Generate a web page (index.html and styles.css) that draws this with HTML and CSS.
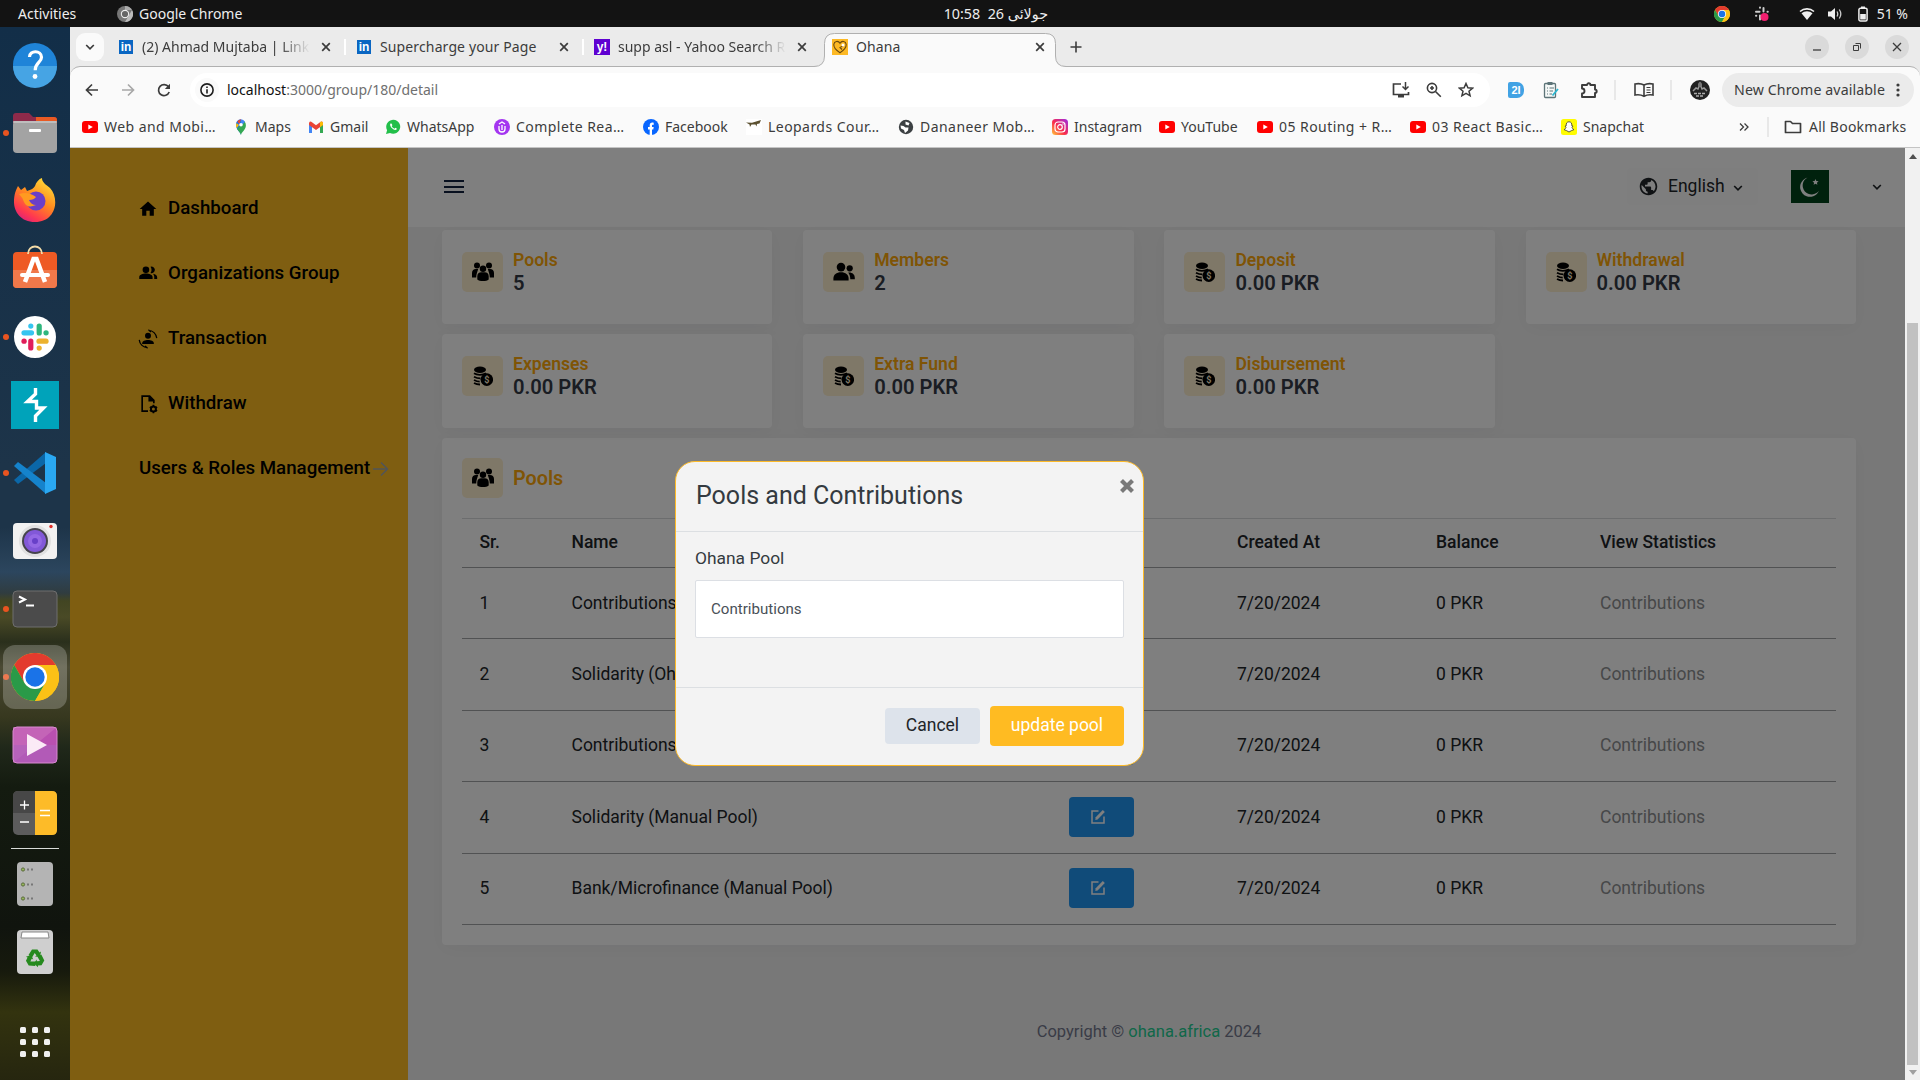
FILE: index.html
```html
<!DOCTYPE html>
<html lang="en">
<head>
<meta charset="utf-8">
<title>Ohana</title>
<link rel="stylesheet" href="styles.css">
</head>
<body>
<svg class="defs" width="0" height="0" aria-hidden="true">
  <symbol id="close" viewBox="0 0 10 10"><path d="M1.2 1.2l7.6 7.6M8.8 1.2L1.2 8.8" stroke="#3c3c3c" stroke-width="1.7" fill="none"/></symbol>
  <symbol id="youtube" viewBox="0 0 16 16"><rect y="2" width="16" height="12" rx="3" fill="#f00"/><path d="M6.3 5.4v5.2L10.8 8z" fill="#fff"/></symbol>
  <symbol id="chrome" viewBox="0 0 48 48"><circle cx="24" cy="24" r="24" fill="#fbc116"/><path d="M3.2 12A24 24 0 0 1 44.8 12H24L13.6 30z" fill="#e33b2e"/><path d="M3.2 12A24 24 0 0 0 24 48L34.4 30 24 36 13.6 30z" fill="#2a9a48"/><path d="M24 12h20.8A24 24 0 0 1 24 48l10.4-18z" fill="#fbc116"/><circle cx="24" cy="24" r="12" fill="#fff"/><circle cx="24" cy="24" r="9.7" fill="#1a73e8"/></symbol>
  <symbol id="chevron" viewBox="0 0 10 6"><path d="M1.2 1l3.8 3.8L8.8 1" stroke="currentColor" stroke-width="1.7" fill="none"/></symbol>
  <symbol id="group" viewBox="0 0 22 20"><g fill="#000"><circle cx="5" cy="3.6" r="3"/><circle cx="17" cy="3.6" r="3"/><path d="M0 15.600V11c0-2.600 1.600-4.100 4-4.100h2.200c-.8 3.100-1.900 4.500-2 8.700zM22 15.600V11c0-2.600-1.600-4.100-4-4.100h-2.200c.8 3.100 1.900 4.500 2 8.700z"/><circle cx="11" cy="6.700" r="3.200"/><path d="M5.300 17.500v-3.300c0-2.500 1.600-3.900 4-3.900h3.400c2.400 0 4 1.400 4 3.900v3.300c-1.300 1-3.200 1.500-5.700 1.500s-4.400-.5-5.700-1.500z"/></g></symbol>
  <symbol id="members" viewBox="0 0 22 20"><g fill="#000"><circle cx="8" cy="5.100" r="4.300"/><path d="M.4 18.600v-2.200c0-3.700 3-6.200 7.600-6.200s7.600 2.500 7.600 6.200v2.200z"/><circle cx="16.700" cy="6.300" r="3.100"/><path d="M15.200 10.500c3.600-.6 6.600 1.600 6.600 5.200v1.600h-4.500c0-2.800-.7-5.100-2.100-6.800z"/></g></symbol>
  <symbol id="coins" viewBox="0 0 20 20"><ellipse cx="7" cy="3.700" rx="6" ry="3.200"/><path d="M1 7.200c3 2.100 8.600 2.100 12 0M1 10.700c2.500 1.500 4 1.700 6.500 1.700M1 14c2.500 1.500 4 1.700 5.700 1.700M1 17c2.100 1.200 4 1.500 6 1.500" stroke="#000" stroke-width="1.800" fill="none"/><circle cx="13.800" cy="13.600" r="6.300"/><text x="13.800" y="16.800" text-anchor="middle" class="coin-sign">$</text></symbol>
  <symbol id="edit" viewBox="0 0 16 16"><path d="M8.500 2H2v12h12V7.500" stroke="#fff" stroke-width="1.500" fill="none"/><path d="M5.300 11l.4-2.700L12.800 1l2 2-7.200 7.400z" fill="#fff"/></symbol>
  <symbol id="globe" viewBox="0 0 24 24"><path fill="currentColor" d="M12 2C6.480 2 2 6.480 2 12s4.480 10 10 10 10-4.480 10-10S17.520 2 12 2zm-1 17.930c-3.950-.49-7-3.850-7-7.930 0-.62.080-1.210.210-1.790L9 15v1c0 1.100.9 2 2 2v1.930zm6.900-2.540c-.26-.81-1-1.390-1.900-1.390h-1v-3c0-.55-.45-1-1-1H8v-2h2c.55 0 1-.45 1-1V7h2c1.100 0 2-.9 2-2v-.41c2.930 1.190 5 4.060 5 7.410 0 2.080-.8 3.970-2.100 5.390z"/></symbol>
  <symbol id="slack" viewBox="0 0 28 28"><g stroke-width="5.200" stroke-linecap="round"><path d="M3 9.800h7.500" stroke="#36c5f0"/><path d="M9.800 3v.1" stroke="#36c5f0"/><path d="M18.200 3v7" stroke="#2eb67d"/><path d="M25 9.800h.1" stroke="#2eb67d"/><path d="M18 18.200h7" stroke="#ecb22e"/><path d="M18.200 25v.1" stroke="#ecb22e"/><path d="M9.800 18v7" stroke="#e01e5a"/><path d="M3 18.200h.1" stroke="#e01e5a"/></g></symbol>
</svg>

<header class="topbar">
  <span class="activities">Activities</span>
  <svg class="app-icon" width="16" height="16" viewBox="0 0 16 16"><circle cx="8" cy="8" r="8" fill="#777"/><path d="M8 0a8 8 0 0 1 7 4H8z" fill="#aaa"/><path d="M15 4a8 8 0 0 1-7 12l3.500-6z" fill="#bbb"/><circle cx="8" cy="8" r="4.200" fill="#eee"/><circle cx="8" cy="8" r="3.100" fill="#666"/></svg>
  <span class="app-name">Google Chrome</span>
  <span class="clock" dir="rtl" lang="ur">جولائی 26 &nbsp;10:58</span>
  <div class="tray">
    <svg class="tray-chrome" width="16" height="16"><use href="#chrome"/></svg>
    <svg class="tray-slack" width="16" height="16" viewBox="0 0 16 16"><path d="M2 5.800h3.500M6 1.500v.3M9.500 2v3.500M13.500 5.800h.3M2 9.800h.3M6 9.500v4" stroke="#ccc" stroke-width="2" stroke-linecap="round"/><circle cx="10.500" cy="11" r="4" fill="#f01f6f"/></svg>
    <svg class="tray-wifi" width="16" height="14" viewBox="0 0 16 14"><path d="M1 4.500a10.500 10.500 0 0 1 14 0" stroke="#eee" stroke-width="1.600" fill="none"/><path d="M2.500 6.300a8.500 8.500 0 0 1 11 0L8 13z" fill="#eee"/></svg>
    <svg class="tray-volume" width="16" height="14" viewBox="0 0 16 14"><path d="M1 4.500h3L8 1v12L4 9.500H1z" fill="#eee"/><path d="M10 4.500q1.500 2.500 0 5M12.300 2.500q3 4.500 0 9" stroke="#ccc" stroke-width="1.300" fill="none"/></svg>
    <svg class="tray-battery" width="10" height="16" viewBox="0 0 10 16"><path d="M3 .5h4v1.800H3z" fill="#eee"/><rect x=".9" y="2.300" width="8.200" height="12.700" rx="1.500" fill="none" stroke="#eee" stroke-width="1.500"/><rect x="2.200" y="8" width="5.600" height="5.500" fill="#eee"/></svg>
    <span>51 %</span>
  </div>
</header>

<div class="desktop">
  <nav class="dock">
    <div class="slot"><svg width="46" height="46" viewBox="0 0 46 46"><circle cx="23" cy="23" r="22" fill="#1f84d8"/><path d="M1 24a22 22 0 0 0 44 0z" fill="#46a4e4"/><path d="M17.500 15c0-7 12-7 12 .2 0 5.300-6.300 5.500-6.300 13" stroke="#fff" stroke-width="3.200" fill="none"/><circle cx="23" cy="34.500" r="2.400" fill="#fff"/></svg></div>
    <div class="slot running"><svg width="46" height="42" viewBox="0 0 46 42"><path d="M1 4q0-3 3-3h13l4 4h21q3 0 3 3v12H1z" fill="#8e2a4a"/><path d="M24 5h18q3 0 3 3v10H24z" fill="#e95a23"/><rect x="1" y="9" width="44" height="32" rx="4" fill="#a3a3a3"/><rect x="1" y="9" width="44" height="2" rx="1" fill="#bdbdbd"/><rect x="17" y="17" width="12" height="3" rx="1" fill="#fff"/></svg></div>
    <div class="slot raised"><svg width="44" height="46" viewBox="0 0 44 46"><defs><linearGradient id="ff" x1=".8" y1="0" x2=".2" y2="1"><stop offset="0" stop-color="#ffe13a"/><stop offset=".45" stop-color="#ff8a1e"/><stop offset=".8" stop-color="#ff3750"/><stop offset="1" stop-color="#d8207e"/></linearGradient></defs><path d="M1 25C1 17 3 13 5 9l3 4 4-3 2 4c4-1 7-3 8-5 1-4 4-7 7-8 0 4 3 6 8 10 10 11 6 34-15 34C8 45 1 35 1 25z" fill="url(#ff)"/><circle cx="23" cy="24" r="9.500" fill="#6a3fc8"/><path d="M6 17q9-3 17 3-2 3-7 3 2 5 7 5-9 4-12-3-1-4-5-8z" fill="#ff9a20"/></svg></div>
    <div class="slot raised-more"><svg width="46" height="46" viewBox="0 0 46 46"><rect x="1" y="8" width="44" height="36" rx="4" fill="#ee5a24"/><path d="M1 26h44v14q0 4-4 4H5q-4 0-4-4z" fill="#f0784a"/><path d="M16 10c0-10 14-10 14 0" stroke="#f4dca8" stroke-width="1.800" fill="none"/><path d="M13 38L21.500 15h3L33 38" stroke="#fff" stroke-width="4.500" fill="none"/><path d="M10 31h26" stroke="#fff" stroke-width="4" stroke-linecap="round"/></svg></div>
    <div class="slot running"><svg width="42" height="42" viewBox="0 0 42 42"><circle cx="21" cy="21" r="21" fill="#fff"/><svg x="7" y="7" width="28" height="28"><use href="#slack"/></svg></svg></div>
    <div class="slot"><svg width="48" height="48" viewBox="0 0 48 48"><path d="M0 0h48v48H0z" fill="#00a3ba"/><path d="M24.500 7v6L16.500 20.500H25.500v6.500H32.500L24.500 35v6" stroke="#fff" stroke-width="3.400" fill="none"/></svg></div>
    <div class="slot running"><svg width="44" height="44" viewBox="0 0 44 44"><path d="M1 29l4 4L33 12V1z" fill="#0b67a8"/><path d="M1 15l4-4 28 21v11z" fill="#1583cc"/><path d="M32 1l11 5v32l-11 5z" fill="#2aa8f2"/></svg></div>
    <div class="slot"><svg width="46" height="38" viewBox="0 0 46 38"><rect x="1" y="1" width="44" height="36" rx="4" fill="#f2f2f2"/><circle cx="23" cy="19" r="16" fill="#e1e1e1"/><circle cx="23" cy="19" r="13" fill="#45444c"/><circle cx="23" cy="19" r="11" fill="#8258d8"/><circle cx="23" cy="19" r="7" fill="#9468e4"/><circle cx="23" cy="19" r="3" fill="#6840c8"/><circle cx="39" cy="4.500" r="1.700" fill="#e0302a"/></svg></div>
    <div class="slot running"><svg width="46" height="38" viewBox="0 0 46 38"><rect x="1" y="1" width="44" height="36" rx="4" fill="#4b4b4b" stroke="#6e6e6e"/><path d="M7 6.500l6 3-6 3" stroke="#fff" stroke-width="2" fill="none"/><path d="M14 15.500h8" stroke="#fff" stroke-width="2"/></svg></div>
    <div class="slot running current"><svg width="48" height="48"><use href="#chrome"/></svg></div>
    <div class="slot"><svg width="46" height="38" viewBox="0 0 46 38"><rect x="1" y="1" width="44" height="36" rx="4" fill="#b950b0"/><path d="M1 1h44L1 37z" fill="#cc72bd" opacity=".6"/><path d="M1 19h44v14q0 4-4 4H5q-4 0-4-4z" fill="#ae60bd" opacity=".6"/><rect x="1" y="1" width="44" height="36" rx="4" fill="none" stroke="#d889cf"/><path d="M15 8v22l20-11z" fill="#fbeaf6"/></svg></div>
    <div class="slot"><svg width="46" height="46" viewBox="0 0 46 46"><rect x="1" y="1" width="44" height="44" rx="5" fill="#5c5c5c"/><path d="M1 23V6q0-5 5-5h17v22z" fill="#474747"/><path d="M23 1h17q5 0 5 5v34q0 5-5 5H23z" fill="#fdbb28"/><path d="M8 15h9M12.500 10.500v9M8 32h9M28 20.500h10M28 25.500h10" stroke="#fff" stroke-width="1.300"/></svg></div>
    <hr>
    <div class="slot"><svg width="38" height="46" viewBox="0 0 38 46"><rect x="1" y="1" width="36" height="44" rx="4" fill="#b4b4b4"/><g fill="#93b658" stroke="#5c6b3c"><circle cx="7" cy="8.500" r="1.600"/><circle cx="7" cy="23.500" r="1.600"/><circle cx="7" cy="37.500" r="1.600"/></g><path d="M11 8.500h7M11 23.500h7M11 37.500h7" stroke="#777" stroke-width="2" stroke-dasharray="2 2"/></svg></div>
    <div class="slot"><svg width="38" height="46" viewBox="0 0 38 46"><rect x="1" y="1" width="36" height="44" rx="4" fill="#cfcfcf"/><path d="M5 9l1-6h26l1 6z" fill="#fff" stroke="#888"/><g fill="#268a1e"><path id="leaf" d="M12.500 26l3.500-5.500h5.500l2 3 1.500-1-1 5.500-5-.500 1.500-1-1.800-2.500-2.700 4.500z"/><use href="#leaf" transform="rotate(120 19 29.500)"/><use href="#leaf" transform="rotate(240 19 29.500)"/></g></svg></div>
    <svg class="apps-grid" width="30" height="30" viewBox="0 0 30 30"><g fill="#f0f0f0"><rect width="6" height="6" rx="1.500"/><rect x="12" width="6" height="6" rx="1.500"/><rect x="24" width="6" height="6" rx="1.500"/><rect y="12" width="6" height="6" rx="1.500"/><rect x="12" y="12" width="6" height="6" rx="1.500"/><rect x="24" y="12" width="6" height="6" rx="1.500"/><rect y="24" width="6" height="6" rx="1.500"/><rect x="12" y="24" width="6" height="6" rx="1.500"/><rect x="24" y="24" width="6" height="6" rx="1.500"/></g></svg>
  </nav>

  <div class="browser">
    <div class="tabstrip">
      <div class="tab-search"><svg width="10" height="6"><use href="#chevron"/></svg></div>
      <div class="tab sep"><span class="fav linkedin">in</span><span class="tab-title fade">(2) Ahmad Mujtaba | LinkedIn</span><svg width="10" height="10"><use href="#close"/></svg></div>
      <div class="tab sep"><span class="fav linkedin">in</span><span class="tab-title wide">Supercharge your Page</span><svg width="10" height="10"><use href="#close"/></svg></div>
      <div class="tab"><span class="fav yahoo">y!</span><span class="tab-title fade">supp asl - Yahoo Search Results</span><svg width="10" height="10"><use href="#close"/></svg></div>
      <div class="tab active">
        <svg class="tab-shape" width="252" height="35" viewBox="0 0 252 35"><path d="M0 33.500Q10.500 33.500 10.500 23V10.500Q10.500.5 20.500.5H231.500Q241.500.5 241.500 10.500V23Q241.500 33.500 252 33.500V35H0z" fill="#fafafa"/><path d="M0 33.500Q10.500 33.500 10.500 23V10.500Q10.500.5 20.500.5H231.500Q241.500.5 241.500 10.500V23Q241.500 33.500 252 33.500" fill="none" stroke="#b0b0b0"/></svg>
        <span class="fav"><svg width="16" height="16" viewBox="0 0 16 16"><path d="M0 0h16v16H0z" fill="#fdb924"/><path d="M8 13.800C3 10.500 1.500 8 1.800 5.300 2.300 2 6.300 1.300 8 4.300c1.700-3 5.700-2.300 6.200 1 .2 2.700-1.200 5.200-6.200 8.500zM11.500 6.500L8 8.500l2 2" fill="none" stroke="#6b4a10" stroke-width="1.100"/><circle cx="11" cy="6" r="1.500" fill="#fff"/></svg></span>
        <span class="tab-title wide">Ohana</span><svg width="10" height="10"><use href="#close"/></svg>
      </div>
      <svg class="new-tab" width="12" height="12" viewBox="0 0 12 12"><path d="M6 .5v11M.5 6h11" stroke="#3c3c3c" stroke-width="1.600"/></svg>
      <div class="window-buttons">
        <span><svg width="10" height="10" viewBox="0 0 10 10"><path d="M1 8h8" stroke="#3c3c3c" stroke-width="1.300"/></svg></span>
        <span><svg width="10" height="10" viewBox="0 0 10 10"><path d="M1.500 3.500h5v5h-5zM3.500 1.500h5v5" stroke="#3c3c3c" fill="none"/></svg></span>
        <span><svg width="10" height="10" viewBox="0 0 10 10"><path d="M1 1l8 8M9 1L1 9" stroke="#3c3c3c" stroke-width="1.300"/></svg></span>
      </div>
    </div>

    <div class="toolbar">
      <svg class="nav-btn" width="16" height="16" viewBox="0 0 16 16"><path d="M14 8H3M8 2.500L2.500 8 8 13.500" stroke="#3c3c3c" stroke-width="1.700" fill="none"/></svg>
      <svg class="nav-btn" width="16" height="16" viewBox="0 0 16 16"><path d="M2 8h11M8 2.500L13.500 8 8 13.500" stroke="#a8a8a8" stroke-width="1.700" fill="none"/></svg>
      <svg class="nav-btn" width="16" height="16" viewBox="0 0 16 16"><path d="M13.200 10A5.500 5.500 0 1 1 12.500 4.800" stroke="#3c3c3c" stroke-width="1.700" fill="none"/><path d="M14 1.800V7H8.800z" fill="#3c3c3c"/></svg>
      <div class="omnibox">
        <span class="site-info"><svg width="14" height="14" viewBox="0 0 14 14"><circle cx="7" cy="7" r="6.100" fill="none" stroke="#1f1f1f" stroke-width="1.600"/><path d="M7 6.200v4.200M7 3.400v1.500" stroke="#1f1f1f" stroke-width="1.600"/></svg></span>
        <span class="url"><b>localhost</b>:3000/group/180/detail</span>
        <svg width="18" height="16" viewBox="0 0 18 16"><path d="M9 2H1.500v10.500h15V10" stroke="#3c3c3c" stroke-width="1.700" fill="none"/><path d="M6 13h6v2.500H6z" fill="#3c3c3c"/><path d="M13.500 0v7M10.500 4.500l3 3 3-3" stroke="#3c3c3c" stroke-width="1.500" fill="none"/></svg>
        <svg width="16" height="16" viewBox="0 0 16 16"><circle cx="6" cy="6" r="4.600" fill="none" stroke="#3c3c3c" stroke-width="1.600"/><path d="M9.500 9.500l5.300 5.300M6 4v4M4 6h4" stroke="#3c3c3c" stroke-width="1.600"/></svg>
        <svg width="16" height="16" viewBox="0 0 16 16"><path d="M8 1.500l1.900 4.300 4.700.4-3.600 3 1.100 4.600L8 11.400l-4.100 2.400L5 9.200l-3.600-3 4.700-.4z" stroke="#3c3c3c" stroke-width="1.500" fill="none"/></svg>
      </div>
      <div class="extensions">
        <span class="ext-two">2I</span>
        <svg class="ext-clip" width="16" height="18" viewBox="0 0 16 18"><rect x="1.500" y="2.500" width="11" height="14" rx="1" fill="#f5f8f7" stroke="#5d7478" stroke-width="1.300"/><path d="M4.500 1h5v3h-5z" fill="#5d7478"/><path d="M4 7h1M6.500 7H11M4 10h1M6.500 10H10M4 13h1M6.500 13H9" stroke="#5d7478"/><path d="M9.500 14.500L15 8" stroke="#29b6d0" stroke-width="1.800"/></svg>
        <svg class="ext-puzzle" width="18" height="18" viewBox="0 0 18 18"><path d="M2 4h5a1.700 1.700 0 0 1 3.400 0H15v4.500a1.700 1.700 0 0 1 0 3.400V16H2v-3.500a2.500 2.500 0 0 0 0-5z" stroke="#3c3c3c" stroke-width="1.900" fill="none" stroke-linejoin="round"/></svg>
        <i></i>
        <svg class="ext-book" width="20" height="16" viewBox="0 0 20 16"><path d="M10 3Q6 .8 1 2v11q5-1 9 1.300Q14 12 19 13V2q-5-1.200-9 1zv11" stroke="#3c3c3c" stroke-width="1.600" fill="none"/><path d="M12.500 5.500h4M12.500 8h4M12.500 10.500h4" stroke="#3c3c3c" stroke-width="1.200"/></svg>
        <i></i>
        <svg class="ext-avatar" width="20" height="20" viewBox="0 0 20 20"><circle cx="10" cy="10" r="10" fill="#222"/><path d="M3 11l3-3 2 1 2-5 2 5 2-1 3 3" stroke="#999" stroke-width="1.500" fill="none"/><path d="M4 13.500h12M6 16h8" stroke="#aaa" stroke-width="1.300" stroke-dasharray="3 1"/><path d="M8 3.500l2-2 2 2v3H8z" fill="#777"/></svg>
      </div>
      <div class="update-pill">New Chrome available<svg width="4" height="14" viewBox="0 0 4 14"><g fill="#3c3c3c"><circle cx="2" cy="2" r="1.600"/><circle cx="2" cy="7" r="1.600"/><circle cx="2" cy="12" r="1.600"/></g></svg></div>
    </div>

    <div class="bookmarks">
      <span class="bm cut b1"><svg width="16" height="16"><use href="#youtube"/></svg>Web and Mobi…</span>
      <span class="bm b2"><svg width="16" height="16" viewBox="0 0 16 16"><path d="M8 16c-.6-3-4.900-5-4.900-9.700A5 5 0 0 1 8 .2z" fill="#1a73e8"/><path d="M8 16c.6-3 4.900-5 4.900-9.700A5 5 0 0 0 11 2L4 10c1.500 2.300 3.500 3.800 4 6z" fill="#34a853"/><path d="M8 .2A5 5 0 0 1 12 2.700L8 7z" fill="#4285f4"/><path d="M3.500 4L6 6 3.700 9.200Q2.500 6.500 3.500 4z" fill="#fbbc04"/><path d="M4.300 2.700L6.500 5 8 .2Q5.500.5 4.300 2.700z" fill="#ea4335"/><circle cx="8" cy="5.800" r="1.800" fill="#fff"/></svg>Maps</span>
      <span class="bm b3"><svg width="16" height="16" viewBox="0 0 16 16"><path d="M1 14V4l3 2.200V14z" fill="#4285f4"/><path d="M15 14V4l-3 2.200V14z" fill="#34a853"/><path d="M1 4q1-2.500 3-.8l4 3 4-3Q14 1.500 15 4v2L8 11 1 6z" fill="#ea4335"/><path d="M12 3.200Q14 1.500 15 4v2l-3 2.200z" fill="#fbbc04"/></svg>Gmail</span>
      <span class="bm b4"><svg width="16" height="16" viewBox="0 0 16 16"><path d="M1 15l1.100-3.800A7 7 0 1 1 5 14z" fill="#22bf4a"/><path d="M5.500 4.500c-1.800 2 2.700 7.200 5.700 6.300 1-.9.800-1.400-.8-2l-1 .9C8 9.200 7 8 6.700 7.100l.7-.9c-.5-1.500-.9-1.900-1.900-1.700z" fill="#fff"/></svg>WhatsApp</span>
      <span class="bm cut b5"><svg width="16" height="16" viewBox="0 0 16 16"><circle cx="8" cy="8" r="8" fill="#a435f0"/><path d="M5 7v3a3 3 0 0 0 6 0V7M5 5l3-2 3 2M8 6v5" fill="none" stroke="#fff" stroke-width="1.300"/></svg>Complete Rea…</span>
      <span class="bm b6"><svg width="16" height="16" viewBox="0 0 16 16"><circle cx="8" cy="8" r="8" fill="#0866ff"/><path d="M6.700 16v-5.500H5V8h1.700V6.700c0-2.500 1.200-3.500 4-3v2.200c-1.400-.2-1.700.1-1.700 1V8h1.700l-.4 2.500H9V16z" fill="#fff"/></svg>Facebook</span>
      <span class="bm cut b7"><svg width="16" height="16" viewBox="0 0 16 16"><path d="M0 0h16v16H0z" fill="#fff"/><path d="M0 3.500l6 .300 9-2.800-1.500 3.500-2.500.500-.500 2.500-1-2H5.500L4 8l-.5-2.500z" fill="#5b5030"/></svg>Leopards Cour…</span>
      <span class="bm cut b8"><svg width="16" height="16" viewBox="0 0 16 16"><circle cx="8" cy="8" r="7.200" fill="#3c4043"/><path d="M2.500 6.500l3 .5 2 1.500h3l-.500 3-3 2.500-1-3-3-1.500zM7.500 2.500l4 1.500-1 2.500-3-1z" fill="#fff"/></svg>Dananeer Mob…</span>
      <span class="bm b9"><svg width="16" height="16" viewBox="0 0 16 16"><defs><linearGradient id="ig" x1="0" y1="1" x2="1" y2="0"><stop offset="0" stop-color="#ffc83a"/><stop offset=".45" stop-color="#fa2b4c"/><stop offset="1" stop-color="#9a2be8"/></linearGradient></defs><rect width="16" height="16" rx="3.500" fill="url(#ig)"/><rect x="3" y="3" width="10" height="10" rx="3" fill="none" stroke="#fff" stroke-width="1.200"/><circle cx="8" cy="8" r="2.300" fill="none" stroke="#fff" stroke-width="1.200"/><circle cx="11" cy="5" r=".7" fill="#fff"/></svg>Instagram</span>
      <span class="bm b10"><svg width="16" height="16"><use href="#youtube"/></svg>YouTube</span>
      <span class="bm cut b11"><svg width="16" height="16"><use href="#youtube"/></svg>05 Routing + R…</span>
      <span class="bm cut b12"><svg width="16" height="16"><use href="#youtube"/></svg>03 React Basic…</span>
      <span class="bm b13"><svg width="16" height="16" viewBox="0 0 16 16"><rect width="16" height="16" rx="2.500" fill="#fffc00"/><path d="M8 2.800c2 0 3 1.400 2.800 4l1.200.3-1 1.200c.4 1.300 1.200 2 2 2.300l-2.500 1-2.500 1.400-2.500-1.400L3 10.600c.8-.3 1.600-1 2-2.300L4 7.100l1.200-.3C5 4.200 6 2.800 8 2.800z" fill="#fff" stroke="#333" stroke-width=".8"/></svg>Snapchat</span>
      <span class="bm-more">
        <svg width="10" height="10" viewBox="0 0 10 10"><path d="M1 1.500L4.500 5 1 8.500M5.500 1.500L9 5 5.500 8.500" stroke="#3c3c3c" stroke-width="1.300" fill="none"/></svg>
        <i></i>
        <svg width="18" height="14" viewBox="0 0 18 14"><path d="M1.500 1.500h5l2 2h8v9h-15z" stroke="#3c3c3c" stroke-width="1.700" fill="none" stroke-linejoin="round"/></svg>
        All Bookmarks
      </span>
    </div>

    <div class="viewport">
      <div class="app">
        <aside class="sidebar">
          <a><svg width="20" height="20" viewBox="0 0 24 24"><path d="M10 20v-6h4v6h5v-8h3L12 3 2 12h3v8z"/></svg>Dashboard</a>
          <a><svg width="20" height="20" viewBox="0 0 24 24"><circle cx="9.500" cy="7" r="4"/><path d="M1.500 18v-2c0-3 4-4.500 8-4.500s8 1.500 8 4.500v2zM15 3.200a4 4 0 1 1 0 7.600q2.500-3.800 0-7.600zM18 11.700c3 .6 5 2 5 4.300v2h-3.500v-2c0-1.700-.5-3-1.500-4.300z"/></svg>Organizations Group</a>
          <a><svg width="20" height="20" viewBox="0 0 24 24"><circle cx="12" cy="8" r="3.600"/><path d="M5 18v-1c0-2.500 3.500-3.800 7-3.800s7 1.300 7 3.800v1z"/><path d="M12.500 1.500A10.500 10.500 0 0 1 22.500 11M12.500 1l3 2.500M11.500 22.500A10.500 10.500 0 0 1 1.500 13M11.500 23l-3-2.500" fill="none" stroke="#000" stroke-width="1.500"/></svg>Transaction</a>
          <a><svg width="20" height="20" viewBox="0 0 24 24"><path d="M12 20.500H5v-18h9l5 5V11M13.500 3v5H19" fill="none" stroke="#000" stroke-width="2"/><path d="M13.500 2.500l6 6h-6z"/><circle cx="18.500" cy="18" r="3" fill="none" stroke="#000" stroke-width="2.400"/><path d="M18.500 13v2M18.500 21v2M14.200 15.500l1.700 1M21.200 19.500l1.700 1M14.200 20.500l1.700-1M21.200 16.500l1.700-1" stroke="#000" stroke-width="2"/></svg>Withdraw</a>
          <a class="roles">Users &amp; Roles Management<svg width="16" height="16" viewBox="0 0 16 16"><path d="M0 8h14.500M8 1.500L14.500 8 8 14.500" fill="none" stroke="#a3a9b0" stroke-width="1.500"/></svg></a>
        </aside>
        <div class="main">
          <div class="app-header">
            <svg class="burger" width="20" height="14" viewBox="0 0 20 14"><path d="M0 1h20M0 7h20M0 12h20" stroke="#10203f" stroke-width="2"/></svg>
            <div class="lang"><svg width="21" height="21"><use href="#globe"/></svg>English<svg class="caret" width="10" height="6"><use href="#chevron"/></svg></div>
            <svg class="flag" width="38" height="33" viewBox="0 0 38 33"><path d="M0 0h38v33H0z" fill="#00421a"/><path d="M16.500 7.500a9.800 9.800 0 1 0 11.500 13.200A9 9 0 1 1 16.500 7.500z" fill="#fff"/><path d="M24.500 9l.9 2 2.200.2-1.700 1.500.5 2.100-1.900-1.100-1.900 1.100.5-2.100-1.700-1.500 2.200-.2z" fill="#fff"/></svg>
            <svg class="caret" width="10" height="6"><use href="#chevron"/></svg>
          </div>
          <div class="content">
            <div class="stats">
              <div class="card"><span class="badge"><svg width="22" height="20"><use href="#group"/></svg></span><div><h5>Pools</h5><p>5</p></div></div>
              <div class="card"><span class="badge"><svg width="22" height="20"><use href="#members"/></svg></span><div><h5>Members</h5><p>2</p></div></div>
              <div class="card"><span class="badge"><svg width="20" height="20"><use href="#coins"/></svg></span><div><h5>Deposit</h5><p>0.00 PKR</p></div></div>
              <div class="card"><span class="badge"><svg width="20" height="20"><use href="#coins"/></svg></span><div><h5>Withdrawal</h5><p>0.00 PKR</p></div></div>
              <div class="card"><span class="badge"><svg width="20" height="20"><use href="#coins"/></svg></span><div><h5>Expenses</h5><p>0.00 PKR</p></div></div>
              <div class="card"><span class="badge"><svg width="20" height="20"><use href="#coins"/></svg></span><div><h5>Extra Fund</h5><p>0.00 PKR</p></div></div>
              <div class="card"><span class="badge"><svg width="20" height="20"><use href="#coins"/></svg></span><div><h5>Disbursement</h5><p>0.00 PKR</p></div></div>
            </div>
            <section class="panel">
              <div class="panel-title"><span class="badge"><svg width="22" height="20"><use href="#group"/></svg></span><h4>Pools</h4></div>
              <div class="pool-table">
                <div class="row head"><span>Sr.</span><span>Name</span><span></span><span>Created At</span><span>Balance</span><span>View Statistics</span></div>
                <div class="row"><span>1</span><span>Contributions (Ohana Pool)</span><span></span><span>7/20/2024</span><span>0 PKR</span><span class="link">Contributions</span></div>
                <div class="row"><span>2</span><span>Solidarity (Ohana Pool)</span><span></span><span>7/20/2024</span><span>0 PKR</span><span class="link">Contributions</span></div>
                <div class="row"><span>3</span><span>Contributions (Manual Pool)</span><span><button class="edit"><svg width="16" height="16"><use href="#edit"/></svg></button></span><span>7/20/2024</span><span>0 PKR</span><span class="link">Contributions</span></div>
                <div class="row"><span>4</span><span>Solidarity (Manual Pool)</span><span><button class="edit"><svg width="16" height="16"><use href="#edit"/></svg></button></span><span>7/20/2024</span><span>0 PKR</span><span class="link">Contributions</span></div>
                <div class="row"><span>5</span><span>Bank/Microfinance (Manual Pool)</span><span><button class="edit"><svg width="16" height="16"><use href="#edit"/></svg></button></span><span>7/20/2024</span><span>0 PKR</span><span class="link">Contributions</span></div>
              </div>
            </section>
            <footer>Copyright © <em>ohana.africa</em> 2024</footer>
          </div>
        </div>
        <div class="backdrop">
          <div class="modal">
            <div class="modal-head"><h2>Pools and Contributions</h2><svg class="modal-close" width="16" height="16" viewBox="0 0 16 16"><path d="M2.500 2.500l11 11M13.500 2.500l-11 11" stroke="#797979" stroke-width="4.200"/></svg></div>
            <div class="modal-body"><label>Ohana Pool</label><div class="field">Contributions</div></div>
            <div class="modal-foot"><button class="cancel">Cancel</button><button class="update">update pool</button></div>
          </div>
        </div>
      </div>
      <div class="scrollbar">
        <svg width="8" height="5" viewBox="0 0 8 5"><path d="M4 0l4 5H0z" fill="#505050"/></svg>
        <div class="thumb"></div>
        <svg width="8" height="5" viewBox="0 0 8 5"><path d="M4 5L0 0h8z" fill="#a0a0a0"/></svg>
      </div>
    </div>
  </div>
</div>
</body>
</html>
```

FILE: styles.css
```css
* { box-sizing: border-box; }
body { margin: 0; width: 1920px; height: 1080px; overflow: hidden; display: flex; flex-direction: column; font-family: Roboto, sans-serif; font-size: 17.6px; color: #212529; }
svg { display: block; flex: none; }
.defs { position: absolute; }
h2, h4, h5, p { margin: 0; }
button { border: 0; padding: 0; font: inherit; display: flex; align-items: center; justify-content: center; }

.topbar { height: 27px; flex: none; background: #131313; color: #eee; display: grid; grid-template-columns: 117px 22px 805px 1fr auto; align-items: center; font: 14px "Noto Sans", sans-serif; white-space: nowrap; }
.activities { padding-left: 18px; }
.clock { font-family: "Noto Sans", "DejaVu Sans", sans-serif; width: 104px; line-height: 26px; font-size: 14.300px; }
.tray { display: flex; align-items: center; padding-right: 12px; }
.tray-chrome { margin-right: 24px; }
.tray-slack { margin-right: 29px; }
.tray-wifi { margin-right: 12px; }
.tray-volume { margin-right: 15px; }
.tray-battery { margin-right: 9px; }

.desktop { display: flex; height: 1053px; }
.dock { width: 70px; flex: none; display: flex; flex-direction: column; align-items: center; padding-top: 4px; background: linear-gradient(#122e48 0, #1d3449 440px, #1d3449 500px, #2c465e 545px, #303c40 566px, #424522 574px, #4a4a26 590px, #2a2f1c 615px, #4b4a34 640px, #37381f 690px, #20281a 720px, #141b10 760px, #10140e 900px, #171a0d 945px, #33330f 985px, #26260f 1053px); }
.slot { width: 64px; height: 68px; flex: none; display: flex; align-items: center; justify-content: center; position: relative; }
.raised { padding-bottom: 2px; }
.raised-more { padding-bottom: 5px; }
.running::before { content: ""; position: absolute; left: 0; top: 31px; width: 6px; height: 6px; border-radius: 50%; background: #e95420; }
.current::after { content: ""; position: absolute; inset: 2px 0; border-radius: 12px; background: rgba(255,255,255,.22); }
.current svg { position: relative; z-index: 1; }
.dock hr { width: 48px; height: 1px; margin: 1px 0 1px; border: 0; background: #d9dcd9; flex: none; }
.dock .apps-grid { margin-top: 41px; }

.browser { width: 1850px; background: #ebebeb; display: flex; flex-direction: column; color: #3c3c3c; font: 14px/20px "Noto Sans", sans-serif; white-space: nowrap; }
.tabstrip { height: 39px; flex: none; display: flex; align-items: center; padding-left: 6px; }
.tab-search { width: 28px; height: 28px; margin-right: 6px; border-radius: 9px; background: #fafafa; display: flex; align-items: center; justify-content: center; }
.tab { width: 238px; height: 39px; display: flex; align-items: center; padding-left: 8px; position: relative; }
.tab > * { position: relative; }
.tab.sep::after { content: ""; position: absolute; left: 234px; top: 12px; width: 2px; height: 16px; background: #fff; }
.fav { width: 16px; height: 16px; margin-right: 8px; flex: none; font: bold 12px/16px "Liberation Sans", sans-serif; color: #fff; text-align: center; }
.linkedin { background: #0a66c2; border: 1px solid #ebebeb; line-height: 14px; }
.yahoo { background: #5f01d1; }
.tab-title { width: 168px; overflow: hidden; margin-right: 11px; }
.wide { letter-spacing: .13px; }
.fade { mask-image: linear-gradient(90deg, #000 138px, transparent 168px); }
.tab .tab-shape { position: absolute; left: -10px; top: 6px; }
.new-tab { margin-left: 8px; }
.window-buttons { display: flex; gap: 16px; margin-left: auto; padding-right: 11px; }
.window-buttons span { width: 24px; height: 24px; border-radius: 50%; background: #dadada; display: flex; align-items: center; justify-content: center; }

.toolbar { height: 46px; flex: none; display: flex; align-items: center; padding: 1px 6px 0 14px; background: #fafafa; border-top: 1px solid #b0b0b0; border-radius: 10px 10px 0 0; }
.nav-btn { margin-right: 20px; }
.nav-btn + .nav-btn + .nav-btn { margin-right: 18px; }
.omnibox { width: 1300px; height: 34px; border-radius: 17px; background: #fff; display: flex; align-items: center; gap: 16px; padding: 0 16px 0 5px; }
.site-info { width: 24px; height: 24px; border-radius: 50%; background: #fafafa; display: flex; align-items: center; justify-content: center; }
.url { flex: 1; margin-left: -8px; color: #707070; }
.url b { font-weight: 400; color: #111; }
.extensions { flex: 1; display: flex; align-items: center; padding-left: 18px; }
.extensions i, .bm-more i { width: 2px; height: 20px; background: #e8e8e8; }
.ext-two { width: 16px; height: 16px; margin-right: 19px; border-radius: 2px 7px 7px 2px; background: #41a2e4; color: #fff; font: bold 11px/16px "Liberation Sans", sans-serif; text-align: center; }
.ext-clip { margin-right: 21px; }
.ext-puzzle { margin-right: 16px; }
.ext-book { margin: 0 16px 0 18px; }
.ext-avatar { margin-left: 18px; }
.update-pill { width: 192px; height: 34px; border-radius: 17px; background: #ebebeb; padding: 0 14px 0 12px; display: flex; align-items: center; justify-content: space-between; font-size: 14.200px; letter-spacing: .1px; }

.bookmarks { height: 36px; flex: none; display: flex; align-items: center; background: #fafafa; border-bottom: 1px solid #c4c4c4; padding: 0 12px 5px 12px; }
.bm { display: flex; align-items: center; gap: 6px; }
.cut { letter-spacing: .45px; }
.b1 { width: 151px; } .b2 { width: 75px; } .b3 { width: 77px; } .b4 { width: 109px; } .b5 { width: 149px; } .b6 { width: 103px; } .b7 { width: 152px; }
.b8 { width: 154px; } .b9 { width: 107px; } .b10 { width: 98px; } .b11 { width: 153px; } .b12 { width: 151px; }
.bm-more { display: flex; align-items: center; margin-left: auto; width: 169px; letter-spacing: .25px; }
.bm-more i { margin: 0 15px 0 18px; }
.bm-more svg + i + svg { margin-right: 7px; }

.viewport { flex: 1; display: flex; font: 17.500px/1.5 Roboto, sans-serif; color: #212529; }
.app { width: 1835px; height: 932px; display: flex; position: relative; overflow: hidden; background: #f1f1f1; }
.sidebar { width: 338px; background: #ffbd22; padding: 28px 0 0 69px; }
.sidebar a { height: 65px; display: flex; align-items: center; gap: 10px; color: #000; font-weight: 500; font-size: 18.700px; }
.sidebar a svg { margin-left: -1px; }
.sidebar .roles { gap: 4px; }
.main { width: 1497px; }
.app-header { height: 79px; background: #fff; display: flex; align-items: center; padding: 0 23px 2px 36px; }
.lang { width: 131px; height: 37px; margin-left: auto; border-radius: 4px; background: #fcfcfc; display: flex; align-items: center; padding-left: 11px; gap: 9px; }
.lang .caret { margin-top: 2px; margin-left: -1px; }
.flag { margin: 0 43px 0 33px; }
.content { padding: 3px 49px 0 34px; }
.stats { display: grid; grid-template-columns: repeat(4, 330.400px); gap: 10px 30.800px; margin-bottom: 10px; }
.card, .panel { background: #fff; border-radius: 4px; box-shadow: 0 4px 20px rgba(18,38,63,.04); }
.card { height: 94px; padding: 22px 20px; display: flex; gap: 10px; }
.badge { width: 41px; height: 40px; border-radius: 5px; background: #fff0d0; display: flex; align-items: center; justify-content: center; }
.coin-sign { font: bold 9px Roboto, sans-serif; fill: #fff0d0; }
h5 { font-size: 17.600px; line-height: 20px; font-weight: 600; color: #ffa90a; margin-top: -2px; }
.card p { font-size: 20.200px; line-height: 26px; font-weight: 600; color: #343a46; }
.panel { height: 507px; padding: 20px; }
.panel-title { display: flex; align-items: center; gap: 10px; margin-bottom: 20px; }
h4 { font-size: 19.800px; line-height: 24px; padding-top: 2px; font-weight: 600; color: #ffa90a; }
.pool-table { border-top: 1px solid #d9dbdd; }
.row { height: 71.400px; display: grid; grid-template-columns: 92px 497.500px 168px 199px 164px 253px; align-items: center; border-bottom: 1px solid #a2a4a6; padding: 0 0 1px 17.500px; }
.row.head { height: 49px; font-weight: 500; padding-bottom: 1px; }
.link { color: #8e9092; }
.edit { width: 65px; height: 40px; border-radius: 4px; background: #2196f3; padding-right: 7px; }
footer { padding-top: 75px; text-align: center; font-size: 16.500px; color: #74788d; }
footer em { font-style: normal; color: #22cf92; }

.backdrop { position: absolute; inset: 0; background: rgba(0,0,0,.5); }
.modal { width: 469px; height: 305px; margin: 313px 0 0 605px; border: 1px solid #fdba28; border-radius: 20px; background: #f3f3f3; }
.modal-head { height: 70px; border-bottom: 1px solid #dcdfe2; display: flex; justify-content: space-between; padding: 16px 8px 0 20px; }
.modal-head h2 { font-size: 25px; line-height: 36px; font-weight: 400; color: #343a40; }
.modal-body { height: 156px; border-bottom: 1px solid #dcdfe2; padding: 13px 19px; color: #343a40; font-size: 17.400px; }
.field { height: 58px; margin-top: 9px; border: 1px solid #dcdfe4; border-radius: 2px; background: #fff; padding: 0 15px; font-size: 15.100px; line-height: 57px; color: #495057; }
.modal-body label { display: block; line-height: 26px; }
.modal-foot { display: flex; justify-content: flex-end; align-items: center; gap: 10px; padding: 18px 19px 0 0; }
.modal-foot button { padding-bottom: 2px; }
.cancel { width: 95px; height: 36px; border-radius: 4px; background: #dde3eb; color: #212529; }
.update { width: 134px; height: 40px; border-radius: 4px; background: #ffbb22; color: #fff; }

.scrollbar { width: 15px; background: #f1f1f1; display: flex; flex-direction: column; align-items: center; padding: 6px 0; }
.thumb { width: 11px; height: 742px; margin: 164px 0 5px; background: #c1c1c1; }
```
